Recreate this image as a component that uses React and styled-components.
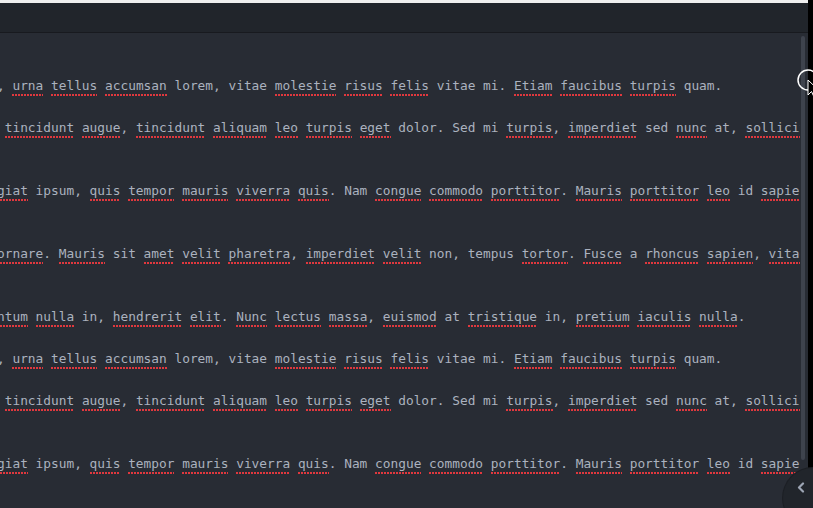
import React from "react";
import styled, { createGlobalStyle } from "styled-components";

const Global = createGlobalStyle`
  html, body { margin: 0; padding: 0; background: #000; overflow: hidden; }
  #root { width: 813px; height: 508px; }
`;

const Page = styled.div`
  position: relative;
  display: flex;
  width: 813px;
  height: 508px;
  overflow: hidden;
  background: #000;
`;

const Main = styled.div`
  display: flex;
  flex-direction: column;
  width: 808px;
  height: 100%;
`;

const TopStrip = styled.div`
  height: 3px;
  flex: none;
  background: #efefef;
`;

const Header = styled.div`
  height: 29px;
  flex: none;
  background: #21252b;
  border-bottom: 1px solid #181a1f;
`;

const Editor = styled.div`
  flex: 1;
  display: flex;
  min-height: 0;
  background: #282c34;
`;

const Content = styled.div`
  width: 800px;
  flex: none;
  overflow: hidden;
  padding-top: 42px;
  box-sizing: border-box;
`;

const Lines = styled.div`
  margin-left: -3px;
  font-family: "DejaVu Sans Mono", "Liberation Mono", monospace;
  font-size: 12.82px;
  line-height: 21px;
  color: #abb2bf;
  white-space: pre;
`;

const Line = styled.div`
  height: 21px;
`;

const Misspelled = styled.span`
  padding-bottom: 3px;
  background-image: linear-gradient(to right, #e0383e 2px, transparent 2px);
  background-size: 3px 2px;
  background-repeat: repeat-x;
  background-position: left bottom;
`;

const Track = styled.div`
  width: 8px;
  flex: none;
  display: flex;
  padding: 3px 3px 0 1px;
  box-sizing: border-box;
`;

const Thumb = styled.div`
  width: 4px;
  height: 424px;
  border-radius: 2px;
  background: #3e434d;
`;

const FloatButton = styled.div`
  position: absolute;
  left: 783px;
  top: 468px;
  width: 60px;
  height: 60px;
  border-radius: 50%;
  background: #21252b;
  box-shadow: 0 0 0 1px #1c1f24;
  display: flex;
  align-items: flex-start;
  padding: 14px 0 0 14px;
  box-sizing: border-box;
`;

const CursorLayer = styled.svg`
  position: absolute;
  left: 796px;
  top: 68px;
  overflow: visible;
`;

const L1 = ", ~urna~ ~tellus~ ~accumsan~ lorem, vitae ~molestie~ ~risus~ ~felis~ vitae mi. ~Etiam~ ~faucibus~ ~turpis~ quam.";
const L2 = " ~tincidunt~ ~augue~, ~tincidunt~ ~aliquam~ ~leo~ ~turpis~ ~eget~ dolor. Sed mi ~turpis~, ~imperdiet~ sed ~nunc~ at, ~sollicitudin~ ~nisl~";
const L3 = "~giat~ ipsum, ~quis~ ~tempor~ ~mauris~ ~viverra~ ~quis~. Nam ~congue~ ~commodo~ ~porttitor~. ~Mauris~ ~porttitor~ ~leo~ id ~sapien~";
const L4 = "~ornare~. ~Mauris~ sit ~amet~ ~velit~ ~pharetra~, ~imperdiet~ ~velit~ non, tempus ~tortor~. ~Fusce~ a ~rhoncus~ ~sapien~, ~vitae~";
const L5 = "~ntum~ ~nulla~ in, ~hendrerit~ ~elit~. ~Nunc~ ~lectus~ ~massa~, ~euismod~ at ~tristique~ in, ~pretium~ ~iaculis~ ~nulla~.";

const rows = [L1, "", L2, "", "", L3, "", "", L4, "", "", L5, "", L1, "", L2, "", "", L3, "", ""];

function renderLine(text) {
  return text.split(/(~[^~]+~)/).filter(Boolean).map((part, i) =>
    part.startsWith("~") ? (
      <Misspelled key={i}>{part.slice(1, -1)}</Misspelled>
    ) : (
      <React.Fragment key={i}>{part}</React.Fragment>
    )
  );
}

export default function App() {
  return (
    <>
      <Global />
      <Page>
        <Main>
          <TopStrip />
          <Header />
          <Editor>
            <Content>
              <Lines>
                {rows.map((r, i) => (
                  <Line key={i}>{renderLine(r)}</Line>
                ))}
              </Lines>
            </Content>
            <Track>
              <Thumb />
            </Track>
          </Editor>
        </Main>
        <FloatButton>
          <svg width="8" height="11" viewBox="0 0 8 11">
            <path d="M6 1.5 L2 5.5 L6 9.5" fill="none" stroke="#9da5b4" strokeWidth="2.2" strokeLinecap="round" strokeLinejoin="round" />
          </svg>
        </FloatButton>
        <CursorLayer width="20" height="30" viewBox="0 0 20 30">
          <circle cx="12" cy="12" r="10" fill="none" stroke="#ffffff" strokeWidth="1.5" />
          <path d="M12 12 L12 27 L15.5 23.5 L18 29 L20.5 28 L18 22.5 L23 22.5 Z" fill="#000" stroke="#fff" strokeWidth="1" strokeLinejoin="round" />
        </CursorLayer>
      </Page>
    </>
  );
}
